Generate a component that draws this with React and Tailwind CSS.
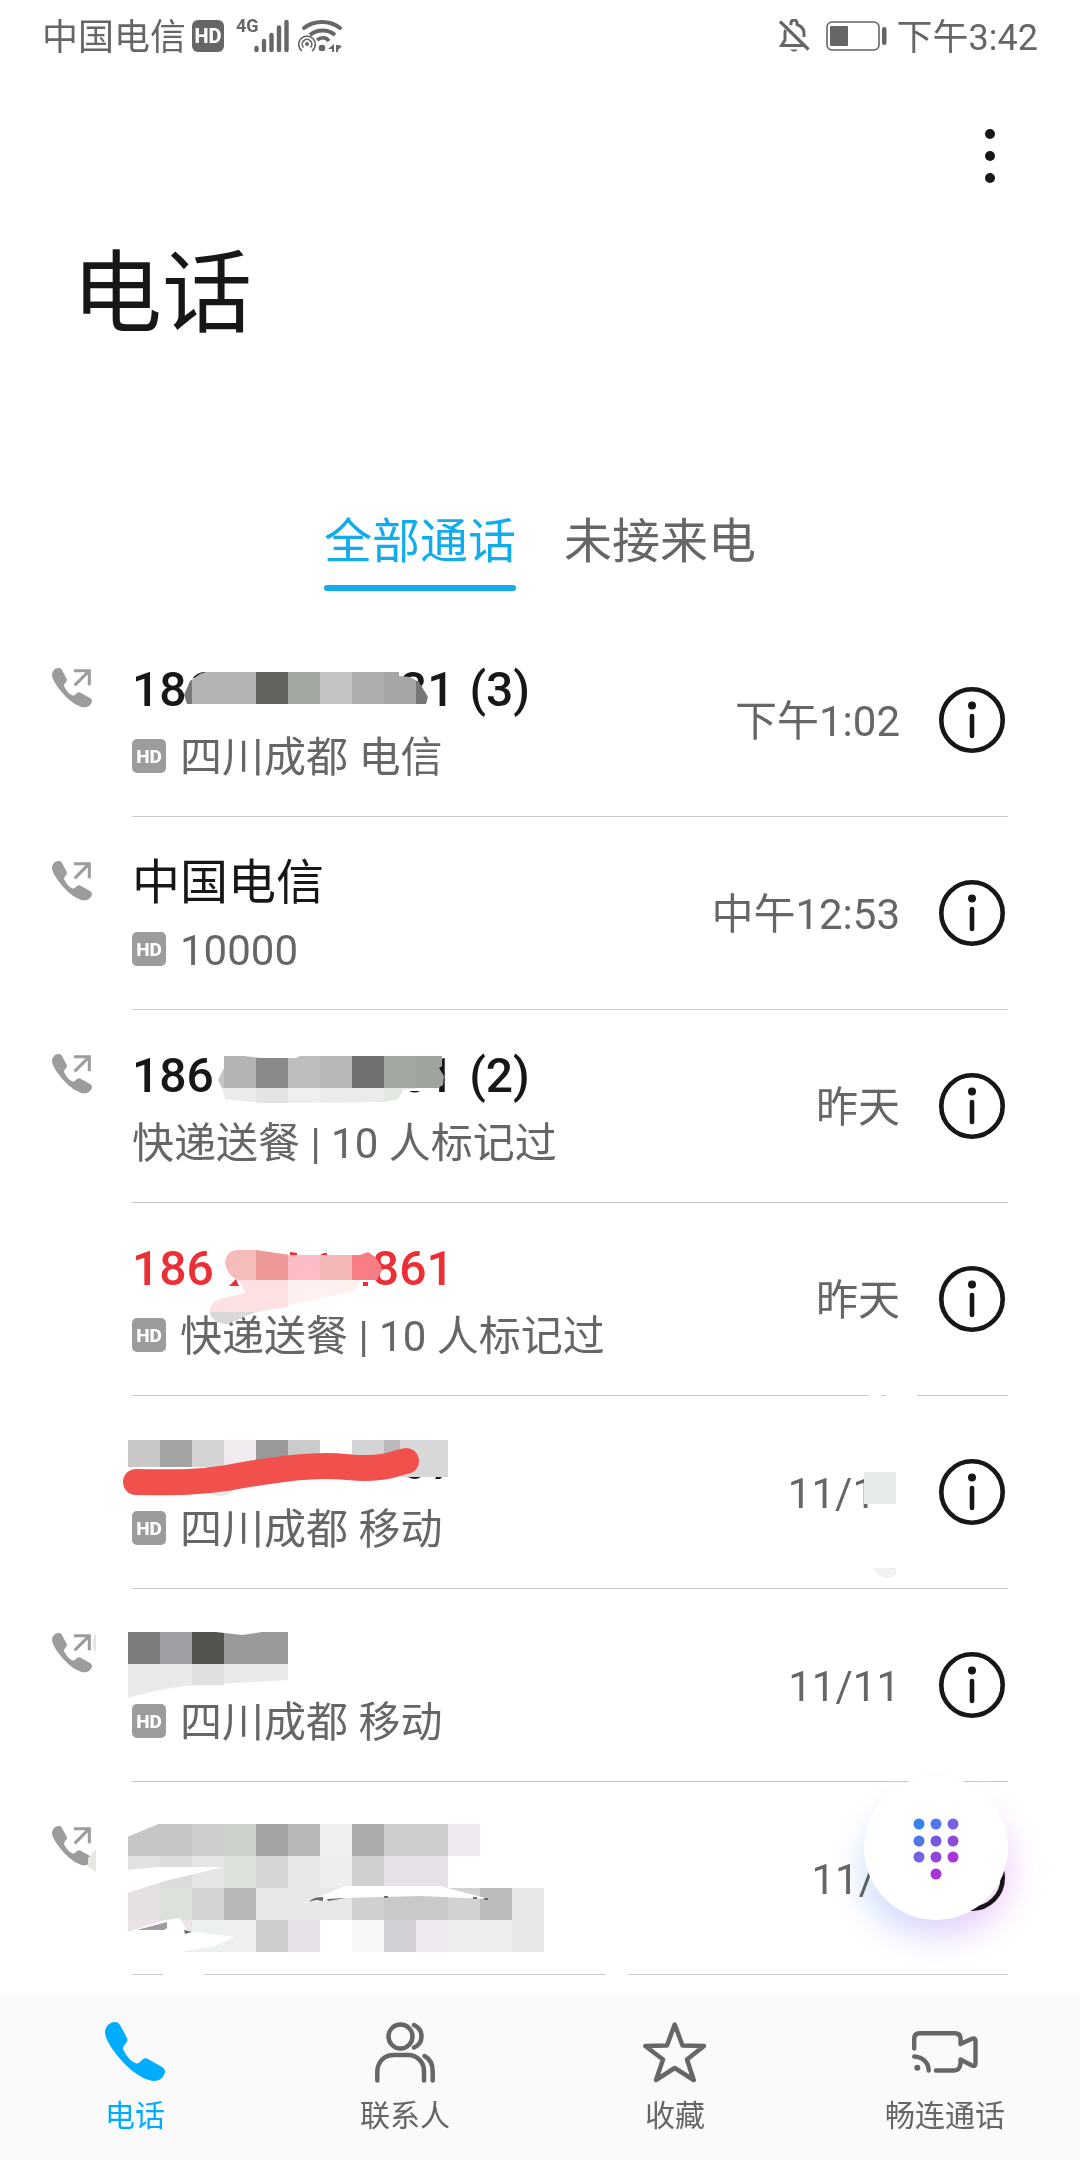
import { useState } from 'react'

const HANDSET = 'M10 0C12 0 14 1 15 3L22 16C23 18 22 20 21 21C18 25 17 26 19 29C22 35 26 39 30 41C33 42 34 41 37 38C39 36 41 36 43 37L57 45C59 46 60 48 60 50C59 55 55 59 49 59C44 59 34 55 24 46C12 35 1 20 0 11C0 5 4 0 10 0Z'

const BellOffIcon = () => (
  <svg width="31" height="34" viewBox="0 0 31 34" fill="none" stroke="currentColor" strokeWidth="3" className="shrink-0" aria-hidden="true">
    <path d="M12 6V4a3 3 0 0 1 6 0v1.500C22 7 25 9.500 25 14v4" />
    <path d="M6.500 11C6 12 6 13 6 15v6l-3.500 5.500H24" />
    <path d="M1 2.500L29.500 30.500" strokeWidth="3.200" />
    <path d="M11.500 30.500h7c-1 2.800-6 2.800-7 0z" fill="currentColor" stroke="none" />
  </svg>
)

const BatteryIcon = () => (
  <svg width="61" height="30" viewBox="0 0 61 30" className="shrink-0" aria-hidden="true">
    <rect x="1" y="1" width="52" height="28" rx="5" fill="none" stroke="currentColor" strokeWidth="1.600" />
    <rect x="4" y="5" width="18" height="20" rx="1" fill="currentColor" />
    <rect x="56" y="6" width="4.500" height="18" rx="2" fill="currentColor" />
  </svg>
)

const SignalIcon = () => (
  <svg width="35" height="34" viewBox="0 0 35 34" stroke="currentColor" strokeWidth="4.400" strokeLinecap="round" className="shrink-0" aria-hidden="true">
    <path d="M2.500 29v2M10 22v9M17.500 16v15M25 8.500V31M32.500 3v28" />
  </svg>
)

const WifiIcon = () => (
  <svg width="44" height="34" viewBox="0 0 44 34" fill="none" stroke="currentColor" className="shrink-0" aria-hidden="true">
    <path d="M6 9C16 1 32 1 42 9" strokeWidth="3.800" strokeLinecap="round" />
    <path d="M12 16C19 10 30 10 37 16" strokeWidth="3.800" />
    <path d="M19 21C23 18 28 18 31 22" strokeWidth="3.600" />
    <path d="M4 32a8.300 8.300 0 1 1 10 0" strokeWidth="1.700" />
    <path d="M5.500 28.500a4.800 4.800 0 1 1 7 0" strokeWidth="1.700" />
    <circle cx="9" cy="25" r="2" fill="currentColor" stroke="none" />
    <circle cx="24" cy="29" r="3.300" fill="currentColor" stroke="none" />
    <path d="M30 30L36 25V33H34V30ZM38 26H40L44 27L40 31V33H38Z" fill="currentColor" stroke="none" />
  </svg>
)

const PhoneIcon = () => (
  <svg width="60" height="60" viewBox="0 0 60 60" fill="currentColor" aria-hidden="true"><path d={HANDSET} /></svg>
)

const ContactsIcon = () => (
  <svg width="60" height="61" viewBox="0 0 60 61" fill="none" stroke="currentColor" strokeWidth="4.500" strokeLinecap="round" aria-hidden="true">
    <circle cx="25.500" cy="14.500" r="12" />
    <path d="M39 3C49 8 49 21 39 25.500" />
    <path d="M2.300 58.500V50C2.300 40 9 33 19 33H33C42 33 49 40 49 49V58.500" />
    <path d="M49.500 34C55 37 57.700 42 57.700 49V58.500" />
  </svg>
)

const StarIcon = () => (
  <svg width="64" height="61" viewBox="0 0 64 61" fill="none" stroke="currentColor" strokeWidth="4.500" strokeLinejoin="round" aria-hidden="true">
    <path d="M31.700 2.500L39.500 23.500L61 24L44 37.500L50.700 58L31.700 46L13 58L20 37.500L2.300 24L24 23.500Z" />
  </svg>
)

const VideoIcon = () => (
  <svg width="66" height="42" viewBox="0 0 66 42" fill="none" stroke="currentColor" strokeWidth="4.400" strokeLinecap="round" strokeLinejoin="round" aria-hidden="true">
    <path d="M2.200 17.500V8Q2.200 2.200 8 2.200H42.500Q48.500 2.200 48.500 8V13L60 7.800Q63.500 6.500 63.500 10V32Q63.500 36 60 34.500L48.500 28.500V33Q47.500 39.500 42 39.500H24" />
    <path d="M2.200 25.500C11 26 16.700 32 16.700 39.500" />
    <circle cx="5.300" cy="36.700" r="3" fill="currentColor" stroke="none" />
  </svg>
)

const OutgoingIcon = () => (
  <svg width="40" height="40" viewBox="0 0 60 60" className="text-[#9c9c9c]" role="img" aria-label="呼出">
    <path d={HANDSET} fill="currentColor" />
    <path d="M33 4H56V26M34 26L56 4" fill="none" stroke="currentColor" strokeWidth="4.600" />
  </svg>
)

const InfoIcon = () => (
  <svg width="66" height="66" viewBox="0 0 66 66" fill="none" stroke="#171717" strokeWidth="4.600" aria-hidden="true">
    <circle cx="33" cy="33" r="30.700" />
    <circle cx="33" cy="18.500" r="4" fill="#171717" stroke="none" />
    <path d="M33 29V49" strokeLinecap="round" />
  </svg>
)

// One 32px strip of blocks, null leaves a hole
const Strip = ({ x = 128, y, h = 32, colors }) => colors.map((c, i) => (
  c && <rect key={i} x={x + i * 32} y={y} width="32" height={h} fill={c} shapeRendering="crispEdges" />
))

const Cover = ({ children }) => (
  <svg className="absolute left-0 top-0 w-[660px] h-full overflow-visible pointer-events-none" aria-hidden="true">{children}</svg>
)

const RightCover = ({ children }) => (
  <svg className="absolute right-0 top-0 w-[216px] h-full overflow-visible pointer-events-none" aria-hidden="true">{children}</svg>
)

const calls = [
  {
    id: 1, out: true, hd: true, head: '186', gap: 'w-[186px]', tail: '31', count: '(3)', place: '四川成都 电信', time: '下午1:02',
    cover: (
      <Cover>
        <clipPath id="c1"><path d="M187 80L184 71L190 57L200 50L206 48H399V52L410 53L419 58L428 73L426 80Z" /></clipPath>
        <path d="M187 79H424V85H187ZM186 62L192 54L230 60L200 80Z" fill="#fff" />
        <g clipPath="url(#c1)">
          <Strip x={160} y={48} colors={['#787878', '#b4b4b4', '#b4b4b4', '#62645f', '#a3a9a2', '#c4c4c4', '#adadad', '#a6a6a6', '#777777']} />
        </g>
      </Cover>
    ),
  },
  { id: 2, out: true, hd: true, name: '中国电信', place: '10000', time: '中午12:53' },
  {
    id: 3, out: true, head: '186', gap: 'w-[213px]', tail: '1', count: '(2)', place: '快递送餐 | 10 人标记过', time: '昨天',
    cover: (
      <Cover>
        <clipPath id="c3"><path d="M222 78L218 70L224 58V46H244L260 48H296L300 46H442V56L439 58L444 66L443 75L436 79H404L398 89L384 92L300 93H260L225 89Z" /></clipPath>
        <g clipPath="url(#c3)">
          <Strip x={192} y={46} colors={['#c4c4c4', '#b5b4b5', '#8a888b', '#bebebe', '#b8b8b8', '#726f73', '#a1a8a0', '#9ea59d']} />
          <Strip x={192} y={78} h={16} colors={['#ececec', '#ebebeb', '#e4e4e4', '#efefef', '#ebebeb', '#ebebeb', '#e3e8e3']} />
        </g>
        <path d="M409 81h11q-5 3-11 0z" fill="#171717" />
      </Cover>
    ),
  },
  {
    id: 4, missed: true, hd: true, head: '186', gap: 'w-[158px]', tail: '861', place: '快递送餐 | 10 人标记过', time: '昨天',
    cover: (
      <>
        <Cover>
          <clipPath id="c4"><path d="M225 59Q227 47 238 47H256L290 52H360L368 49Q380 56 382 67L377 77H239Q227 74 225 59Z" /></clipPath>
          <g clipPath="url(#c4)">
            <Strip x={224} y={45} colors={['#f5bcbc', '#ee9998', '#fdbcc6', '#f5b8b9', '#f97d84']} />
          </g>
          <path d="M239 77H360Q360 86 350 89L285 103L250 110H210Q209 100 220 96L245 90Z" fill="#fff1f0" />
          <path d="M239 77H288V104L250 110H210Q209 100 220 96L245 90Z" fill="#fde1e1" />
          <path d="M210 109H256L246 113L228 121Q212 121 210 109Z" fill="#d9d7d7" />
          <path d="M229 83L236 76L239 83ZM290 52V49L297 50V52ZM320 52L324 50H327V52ZM363 79H368V83H363Z" fill="#ec2f35" />
        </Cover>
        <RightCover><path d="M5 191H17V194H5ZM22 191H53V194H22Z" fill="#fff" /></RightCover>
      </>
    ),
  },
  {
    id: 5, hd: true, place: '四川成都 移动', time: '11/1', cut: true,
    cover: (
      <>
        <Cover>
          <Strip y={44} h={27} colors={['#c7c8c7', '#a2a3a3', '#d4d4d5', '#efebef', '#999999', '#cbcbcb', null, '#d4d4d4', '#b9b9b9', '#d8d8d8']} />
          <rect x="400" y="44" width="48" height="37" fill="#d8d8d8" />
          <path d="M208 96Q222 105 234 94Z" fill="#e6e9e7" />
          <path d="M408 81H421Q415 85 408 81ZM435 83L436 81H442L440 83Z" fill="#171717" />
          <path d="M136 86C180 87 200 86 227 82C270 74 300 70 325 70C345 70 350 72 365 72C385 72 390 69 406 65" fill="none" stroke="#f2504c" strokeWidth="26" strokeLinecap="round" />
        </Cover>
        <RightCover>
          <rect x="0" y="76" width="32" height="32" fill="#e7ebe9" />
          <path d="M8 172H32V178Q20 188 8 172Z" fill="#f1f1f1" />
        </RightCover>
      </>
    ),
  },
  {
    id: 6, out: true, hd: true, place: '四川成都 移动', time: '11/11',
    cover: (
      <Cover>
        <path d="M128 75H288V91L185 97Q150 102 128 109Z" fill="#e9eaea" />
        <path d="M192 75H224V96H192Z" fill="#dfe0e0" />
        <Strip y={43} colors={['#7c7d7b', '#a19fa3', '#52544f', '#9b9a9a', '#9b9a9a']} />
        <path d="M216 43L242 46L262 43Z" fill="#fff" />
        <path d="M96 43Q90 53 96 65Z" fill="#e4e4e4" />
      </Cover>
    ),
  },
  {
    id: 7, out: true, time: '11/', cut: true,
    cover: (
      <Cover>
        <Strip y={42} colors={['#c6c6c6', '#c6c6c6', '#cdcdcd', '#ced2cd', '#a3a3a3', '#bab7bb', '#f0f0f0', '#acacac', '#cdcdcd', '#cdcdcd', '#f0eaf0']} />
        <Strip y={74} colors={['#e2e2e2', '#dcdcdc', '#e5e5e5', '#dbe3db', '#d5d5d5', '#e7e7e7', '#eeeeee', '#d1cfd2', '#e6e1e6', '#e6e1e6']} />
        <Strip y={106} colors={['#e5e0e4', '#dae2da', '#d3d3d3', '#bab7bb', '#e7e7e7', '#e7e7e7', '#e7e7e7', '#d1cfd2', '#c9c9c9', '#c9c9c9', '#d2d2d2', '#bcbcbc', '#e7e7e7']} />
        <Strip y={138} colors={['#eee2e9', '#eee2e9', '#edf1ee', '#eef1ef', '#cdcdcd', '#e6e1e6', null, '#f7f7f7', '#d3d1d5', '#f0eaf0', '#eeeeee', '#eeeeee', '#e6e8e5']} />
        <path d="M127 41H161L127 55ZM127 88L160 85H223L165 99L127 111ZM303 121L345 104H440L489 117L420 114L345 116Z" fill="#fff" />
        <path d="M127 150L165 138L180 136L187 149L235 155L215 164L182 170V171H127Z" fill="#fff" />
        <path d="M137 148L167 140V146L164 148Z" fill="#a09ca0" />
        <path d="M184 148L192 150L185 152ZM309 120Q313 115 323 115V119L316 118ZM327 117L346 116L328 119Z" fill="#6b686b" />
        <path d="M384 114h4v2h-4zM473 115h4v2h-4zM484 116h4v2h-4z" fill="#6b686b" />
        <path d="M96 67L88 76V85L96 90Z" fill="#e6e6e3" />
        <path d="M163 191H204V194H163ZM605 191H628V194H605Z" fill="#fff" />
      </Cover>
    ),
  },
]

const HdBadge = () => (
  <span className="flex items-center justify-center w-[34px] h-[34px] mb-1 mr-[14px] rounded-[5px] bg-[#9c9c9c] text-white text-[19px] leading-none font-extrabold">HD</span>
)

const CallRow = ({ call }) => (
  <li className="relative flex">
    <div className="w-[132px] shrink-0 pl-[52px] pt-11">{call.out && <OutgoingIcon />}</div>
    <div className="flex flex-1 items-center h-[193px] mr-[72px] border-b border-[#c8c8c8]">
      <div className="flex-1 pt-1">
        <div className={`flex h-16 text-[48px] leading-[64px] font-medium ${call.missed ? 'text-[#ec2f35]' : 'text-[#171717]'}`}>
          {call.name && <span className="font-normal">{call.name}</span>}
          <span>{call.head}</span>
          {call.gap && <span className={call.gap} />}
          <span>{call.tail}</span>
          {call.count && <span className="ml-[15px]">{call.count}</span>}
        </div>
        <div className="flex items-center h-14 mt-2 text-[42px] leading-[56px]">
          {call.hd && <HdBadge />}
          <span>{call.place}</span>
        </div>
      </div>
      <time className={`pt-1 text-[42px] leading-[56px] ${call.cut ? 'pr-6' : ''}`}>{call.time}</time>
      <button aria-label="详情" className="flex items-center justify-center w-[72px] h-[72px] ml-9"><InfoIcon /></button>
    </div>
    {call.cover}
  </li>
)

const keys = [
  [19, 18, '#3584ea'], [36, 18, '#5176ee'], [53, 18, '#7661e4'],
  [19, 35, '#5176ea'], [36, 35, '#7556dc'], [53, 35, '#8e4bd8'],
  [19, 51, '#7661e4'], [36, 51, '#9146db'], [53, 51, '#ac33d6'],
  [36, 68, '#a833d6'],
]

const DialPadButton = () => (
  <div className="absolute right-[72px] bottom-[73px] w-36 h-36">
    <div className="absolute -inset-x-1 top-7 -bottom-4 rounded-full bg-linear-to-r from-[#9fd0ff] via-[#b9a8f7] to-[#f29cf7] opacity-50 blur-lg mix-blend-multiply" />
    <button aria-label="拨号盘" className="relative flex items-center justify-center w-full h-full rounded-full bg-white">
      <svg width="72" height="84" viewBox="0 0 72 84" aria-hidden="true">
        {keys.map(([x, y, c]) => <circle key={`${x}-${y}`} cx={x} cy={y} r="5.500" fill={c} />)}
      </svg>
    </button>
  </div>
)

const tabs = ['全部通话', '未接来电']

const navItems = [
  { label: '电话', Icon: PhoneIcon },
  { label: '联系人', Icon: ContactsIcon },
  { label: '收藏', Icon: StarIcon },
  { label: '畅连通话', Icon: VideoIcon },
]

export default function App() {
  const [tab, setTab] = useState('全部通话')
  const [page, setPage] = useState('电话')

  return (
    <div className="flex flex-col min-h-screen bg-white text-[#666] font-[Roboto,'Noto_Sans_CJK_SC',sans-serif]">
      <div className="flex items-center justify-between h-[72px] px-[42px] text-[36px] leading-[48px]">
        <div className="flex items-center">
          <span className="pt-1">中国电信</span>
          <span className="flex items-center justify-center w-8 h-8 ml-[6px] rounded-[6px] bg-[#666] text-white text-[20px] leading-none font-extrabold">HD</span>
          <span className="ml-3 mb-5 w-[18px] text-[18px] leading-[18px] font-bold font-['Liberation_Sans_Narrow',Roboto,sans-serif]">4G</span>
          <SignalIcon />
          <span className="w-[9px]" />
          <WifiIcon />
        </div>
        <div className="flex items-center">
          <BellOffIcon />
          <span className="w-4" />
          <BatteryIcon />
          <span className="ml-[10px] pt-1">下午3:42</span>
        </div>
      </div>

      <header>
        <div className="flex justify-end pt-12 pr-[54px]">
          <button aria-label="更多" className="flex flex-col items-center justify-center gap-3 w-[72px] h-[72px]">
            <span className="w-[10px] h-[10px] rounded-full bg-[#171717]" />
            <span className="w-[10px] h-[10px] rounded-full bg-[#171717]" />
            <span className="w-[10px] h-[10px] rounded-full bg-[#171717]" />
          </button>
        </div>
        <h1 className="mt-[55px] px-[72px] text-[90px] leading-[96px] text-[#171717]">电话</h1>
        <div className="flex justify-center gap-12 mt-[167px]">
          {tabs.map((t) => (
            <button key={t} onClick={() => setTab(t)} className={`text-[48px] leading-[64px] ${tab === t ? 'text-[#12abec]' : ''}`}>
              {t}
              <span className={`block h-[6px] mt-[11px] rounded-full ${tab === t ? 'bg-[#12abec]' : ''}`} />
            </button>
          ))}
        </div>
      </header>

      <main className="relative flex-1 mt-[33px] pb-[18px]">
        <ul>
          {calls.map((call) => <CallRow key={call.id} call={call} />)}
        </ul>
        <DialPadButton />
      </main>

      <nav className="relative flex bg-[#fafafa] pt-[29px] pb-6">
        {navItems.map(({ label, Icon }) => (
          <a key={label} href="#" onClick={() => setPage(label)} className={`flex-1 flex flex-col items-center ${page === label ? 'text-[#00acff]' : ''}`}>
            <span className="flex items-center justify-center h-[60px]"><Icon /></span>
            <span className="mt-[14px] text-[30px] leading-[40px]">{label}</span>
          </a>
        ))}
      </nav>
    </div>
  )
}
